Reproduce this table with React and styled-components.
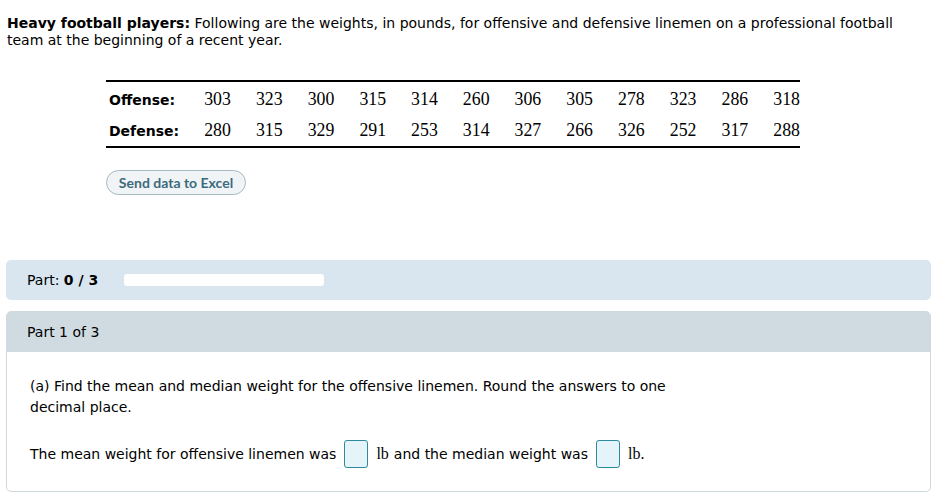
import React from "react";
import styled, { createGlobalStyle } from "styled-components";

const Global = createGlobalStyle`
  html, body { margin: 0; padding: 0; background: #fff; }
  body { font-family: "DejaVu Sans", Verdana, sans-serif; color: #000; }
`;

const Page = styled.div`
  padding: 15px 5px 0 6px;
  width: 925px;
`;

const Intro = styled.p`
  margin: 0 0 0 1px;
  font-size: 14px;
  line-height: 17px;
  b { font-weight: bold; }
`;

const DataTable = styled.table`
  margin: 31px 0 0 100px;
  border-collapse: collapse;
  border-top: 2px solid #000;
  border-bottom: 2px solid #000;
  width: 694px;
  tbody:before {
    content: "";
    display: table-row;
    height: 3px;
  }
  tbody:after {
    content: "";
    display: table-row;
    height: 1px;
  }
`;

const Row = styled.tr`
  height: 31px;
`;

const Label = styled.th`
  font-family: "DejaVu Sans", Verdana, sans-serif;
  font-weight: bold;
  font-size: 14px;
  text-align: left;
  padding: 0 0 0 3px;
  width: 66px;
`;

const Num = styled.td`
  font-family: "Liberation Serif", "Times New Roman", serif;
  font-size: 17.8px;
  text-align: right;
  width: 52px;
  padding: 0;
`;

const ExcelButton = styled.button`
  display: block;
  margin: 22px 0 0 100px;
  height: 25px;
  width: 140px;
  border-radius: 13px;
  border: 1px solid #a7bac2;
  background: #f0f4f6;
  color: #3c6b7d;
  font-family: Lato, "Open Sans", sans-serif;
  font-weight: bold;
  font-size: 14px;
  padding: 0;
`;

const ProgressBar = styled.div`
  margin-top: 65px;
  height: 40px;
  background: #d9e6f0;
  border-radius: 5px;
  display: flex;
  align-items: center;
  padding-left: 21px;
  gap: 26px;
  font-size: 14px;
`;

const PartLabel = styled.span`
  b { font-weight: bold; }
`;

const Track = styled.div`
  width: 200px;
  height: 12px;
  background: #fff;
  border-radius: 3px;
`;

const Panel = styled.section`
  margin-top: 11px;
  border: 1px solid #cfd9de;
  border-radius: 5px;
  overflow: hidden;
`;

const PanelHeader = styled.div`
  height: 40px;
  background: #cfdbe1;
  display: flex;
  align-items: center;
  padding-left: 20px;
  font-size: 14px;
`;

const PanelBody = styled.div`
  padding: 24px 24px 23px 23px;
  font-size: 14px;
`;

const Question = styled.p`
  margin: 0;
  line-height: 21px;
  width: 680px;
`;

const AnswerLine = styled.div`
  margin-top: 22px;
  display: flex;
  align-items: center;
  height: 28px;
`;

const Box = styled.span`
  display: inline-block;
  width: 22px;
  height: 26px;
  border: 1px solid #2d8aa0;
  border-radius: 3px;
  background: #e5f4f8;
  margin: 0 8px 0 8px;
`;

const Unit = styled.span`
  font-family: "Liberation Serif", "Times New Roman", serif;
  font-size: 16px;
  margin-right: 5px;
`;

const offense = [303, 323, 300, 315, 314, 260, 306, 305, 278, 323, 286, 318];
const defense = [280, 315, 329, 291, 253, 314, 327, 266, 326, 252, 317, 288];

export default function App() {
  return (
    <Page>
      <Global />
      <Intro>
        <b>Heavy football players:</b> Following are the weights, in pounds, for offensive and defensive linemen on a professional football team at the beginning of a recent year.
      </Intro>
      <DataTable>
        <tbody>
          <Row>
            <Label>Offense:</Label>
            {offense.map((v, i) => <Num key={i}>{v}</Num>)}
          </Row>
          <Row>
            <Label>Defense:</Label>
            {defense.map((v, i) => <Num key={i}>{v}</Num>)}
          </Row>
        </tbody>
      </DataTable>
      <ExcelButton>Send data to Excel</ExcelButton>
      <ProgressBar>
        <PartLabel>Part: <b>0 / 3</b></PartLabel>
        <Track />
      </ProgressBar>
      <Panel>
        <PanelHeader>Part 1 of 3</PanelHeader>
        <PanelBody>
          <Question>
            (a) Find the mean and median weight for the offensive linemen. Round the answers to one decimal place.
          </Question>
          <AnswerLine>
            The mean weight for offensive linemen was
            <Box />
            <Unit>lb</Unit> and the median weight was
            <Box />
            <Unit>lb.</Unit>
          </AnswerLine>
        </PanelBody>
      </Panel>
    </Page>
  );
}
